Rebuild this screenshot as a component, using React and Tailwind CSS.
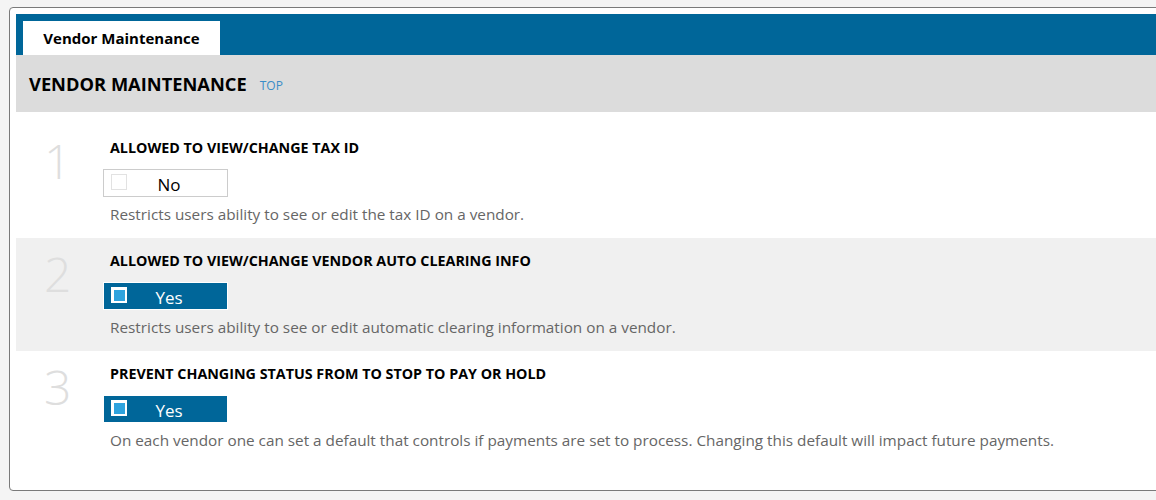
import React from "react";

const rows = [
  {
    n: "1",
    title: "ALLOWED TO VIEW/CHANGE TAX ID",
    value: false,
    desc: "Restricts users ability to see or edit the tax ID on a vendor.",
    bg: "bg-white",
  },
  {
    n: "2",
    title: "ALLOWED TO VIEW/CHANGE VENDOR AUTO CLEARING INFO",
    value: true,
    desc: "Restricts users ability to see or edit automatic clearing information on a vendor.",
    bg: "bg-[#f0f0f0]",
  },
  {
    n: "3",
    title: "PREVENT CHANGING STATUS FROM TO STOP TO PAY OR HOLD",
    value: true,
    desc: "On each vendor one can set a default that controls if payments are set to process. Changing this default will impact future payments.",
    bg: "bg-white",
  },
];

function Toggle({ value }) {
  if (value) {
    return (
      <div className="flex h-[28px] w-[125px] items-center border border-white bg-[#006699]">
        <div className="ml-[7px] mt-[4px] flex h-[16px] w-[16px] items-center justify-center self-start bg-white">
          <div className="h-[11px] w-[11px] bg-[#2ea3de]" />
        </div>
        <div className="mt-[3px] flex-1 pr-[16px] text-center text-[17px] leading-none text-white">Yes</div>
      </div>
    );
  }
  return (
    <div className="flex h-[28px] w-[125px] items-center border border-[#cccccc] bg-white">
      <div className="ml-[7px] mt-[4px] h-[16px] w-[16px] self-start border border-[#e2e2e2] bg-white" />
      <div className="mt-[3px] flex-1 pr-[16px] text-center text-[17px] leading-none text-black">No</div>
    </div>
  );
}

export default function App() {
  return (
    <div
      className="min-h-[500px] w-full overflow-hidden bg-[#f4f4f4] pl-[9px] pt-[7px]"
      style={{ fontFamily: '"Open Sans", "Noto Sans", sans-serif' }}
    >
      <div className="h-[484px] w-[1170px] rounded-[4px] border border-[#7a7a7a] bg-white p-[6px]">
        {/* tab bar */}
        <div className="flex h-[41px] items-end bg-[#006699] pl-[7px]">
          <div className="flex h-[34px] w-[197px] items-center justify-center bg-white text-[15px] font-bold text-black">
            Vendor Maintenance
          </div>
        </div>
        {/* header */}
        <div className="flex h-[57px] items-center bg-[#dcdcdc] pl-[13px]">
          <span className="text-[18.3px] font-bold text-black">VENDOR MAINTENANCE</span>
          <span className="ml-[13px] mt-[4px] text-[12px] text-[#3a8cc8]">TOP</span>
        </div>
        {/* rows */}
        <div className="pt-[13px]">
          {rows.map((r) => (
            <div key={r.n} className={`flex h-[113px] ${r.bg}`}>
              <div className="w-[87px] pl-[28px] pt-[12px] text-[48px] font-light leading-none text-[#dedede]">
                {r.n}
              </div>
              <div className="flex flex-col pt-[13px]">
                <div className="pl-[7px] text-[14.3px] font-bold leading-[20px] text-black">{r.title}</div>
                <div className="mt-[11px]">
                  <Toggle value={r.value} />
                </div>
                <div className="mt-[7px] pl-[7px] text-[15.3px] leading-[20px] text-[#666666]">{r.desc}</div>
              </div>
            </div>
          ))}
        </div>
      </div>
    </div>
  );
}
